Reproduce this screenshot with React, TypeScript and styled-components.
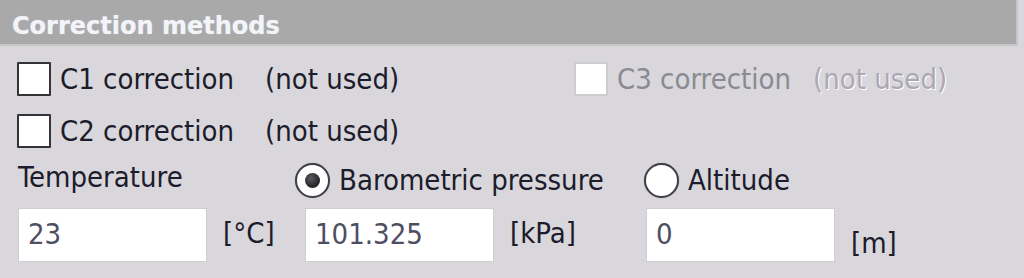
import * as React from 'react'
import styled, { createGlobalStyle } from 'styled-components';

const GlobalStyle = createGlobalStyle`
    html, body{
        margin: 0;
        padding: 0;
        background: #d9d7db;
    }
    body{
        font-family: "DejaVu Sans Condensed", "Liberation Sans", sans-serif;
        color: #1c1c2c;
    }
`;

/* Small pieces */

function CheckBox(props : {label : string, disabled? : boolean}) : React.ReactElement{
    return (
        <CheckCell>
            <Box $disabled={props.disabled}/>
            <Label $disabled={props.disabled}>{props.label}</Label>
        </CheckCell>
    );
}

function Radio(props : {label : string, checked? : boolean}) : React.ReactElement{
    return (
        <RadioCell>
            <RadioRing>{props.checked && <RadioDot/>}</RadioRing>
            <Label>{props.label}</Label>
        </RadioCell>
    );
}

export default function App() : React.ReactElement{
    return (<>
        <GlobalStyle/>
        <Panel>
            <Header>Correction methods</Header>
            <Content>
                <CheckRow $top={14}>
                    <CheckBox label='C1 correction'/>
                    <Note>(not used)</Note>
                    <CheckBox label='C3 correction' disabled/>
                    <Note $disabled>(not used)</Note>
                </CheckRow>
                <CheckRow $top={14}>
                    <CheckBox label='C2 correction'/>
                    <Note>(not used)</Note>
                </CheckRow>
                <ParamRow $top={11}>
                    <Label>Temperature</Label>
                    <Radio label='Barometric pressure' checked/>
                    <Radio label='Altitude'/>
                </ParamRow>
                <InputRow $top={9}>
                    <InputCell>
                        <Field readOnly value='23'/>
                        <Unit>[°C]</Unit>
                    </InputCell>
                    <InputCell>
                        <Field readOnly value='101.325'/>
                        <Unit>[kPa]</Unit>
                    </InputCell>
                    <InputCell>
                        <Field readOnly value='0'/>
                        <Unit $drop={10}>[m]</Unit>
                    </InputCell>
                </InputRow>
            </Content>
        </Panel>
    </>);
}

const Panel = styled.div`
    width: 1024px;
    height: 278px;
    overflow: hidden;
    background: #d9d7db;
`;

const Header = styled.div`
    width: 1018px;
    height: 46px;
    box-sizing: border-box;
    padding: 8px 0 0 12px;
    display: flex;
    align-items: center;
    background: #a9a9a9;
    border-right: 2px solid #c6c6c8;
    border-bottom: 2px solid #c6c6c8;
    font-family: "DejaVu Sans", "Liberation Sans", sans-serif;
    font-weight: bold;
    font-size: 24px;
    color: #f3f4f8;
    text-shadow: 0 0 1px #c9d0de;
`;

const Content = styled.div`
    display: flex;
    flex-direction: column;
`;

const CheckRow = styled.div<{$top : number}>`
    margin-top: ${p => p.$top}px;
    height: 38px;
    padding-left: 17px;
    display: grid;
    grid-template-columns: 248px 309px 239px 1fr;
    align-items: center;
`;

const ParamRow = styled.div<{$top : number}>`
    margin-top: ${p => p.$top}px;
    height: 38px;
    padding-left: 18px;
    display: grid;
    grid-template-columns: 277px 349px 1fr;
    align-items: center;

    & > ${() => Label}{
        margin-top: -6px;
    }
`;

const InputRow = styled.div<{$top : number}>`
    margin-top: ${p => p.$top}px;
    height: 54px;
    padding-left: 18px;
    display: grid;
    grid-template-columns: 287px 341px 1fr;
`;

const CheckCell = styled.div`
    display: flex;
    align-items: center;
    gap: 9px;
`;

const Box = styled.div<{$disabled? : boolean}>`
    width: 34px;
    height: 34px;
    box-sizing: border-box;
    background: #ffffff;
    border: 2px solid ${p => p.$disabled ? '#cdcdcf' : '#333338'};
    border-radius: 1px;
`;

const Label = styled.span<{$disabled? : boolean}>`
    font-size: 29px;
    line-height: 34px;
    white-space: nowrap;
    color: ${p => p.$disabled ? '#8a8a93' : '#1c1c2c'};
`;

const Note = styled.span<{$disabled? : boolean}>`
    font-size: 29px;
    line-height: 34px;
    white-space: nowrap;
    color: ${p => p.$disabled ? '#aba7b5' : '#1c1c2c'};
    text-shadow: ${p => p.$disabled ? '1px 1px 0 #ffffff' : 'none'};
`;

const RadioCell = styled.div`
    display: flex;
    align-items: center;
    gap: 9px;
`;

const RadioRing = styled.div`
    width: 35px;
    height: 35px;
    box-sizing: border-box;
    border-radius: 50%;
    border: 2px solid #404044;
    background: #ffffff;
    box-shadow: 0 0 1px #8a8a8a;
    display: flex;
    align-items: center;
    justify-content: center;
`;

const RadioDot = styled.div`
    width: 15px;
    height: 15px;
    border-radius: 50%;
    background: radial-gradient(circle at 40% 35%, #5a5a5e, #222226 70%);
`;

const InputCell = styled.div`
    display: flex;
    align-items: center;
    gap: 16px;
`;

const Field = styled.input`
    width: 189px;
    height: 54px;
    box-sizing: border-box;
    padding: 0 0 2px 9px;
    margin: 0;
    border: 1px solid #cfcfd2;
    background: #ffffff;
    outline: none;
    font-family: "DejaVu Sans Condensed", "Liberation Sans", sans-serif;
    font-size: 29px;
    color: #4e4e62;
`;

const Unit = styled.span<{$drop? : number}>`
    font-size: 29px;
    white-space: nowrap;
    padding-top: ${p => (p.$drop ?? 0) * 2}px;
    margin-top: -4px;
    color: #1c1c2c;
`;
